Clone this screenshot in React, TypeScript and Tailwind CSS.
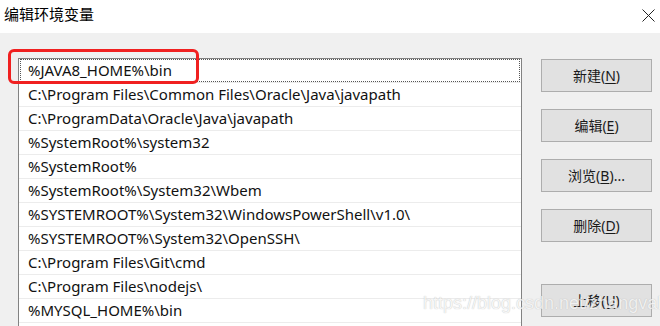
import React from 'react';

const paths = [
    '%JAVA8_HOME%\\bin',
    'C:\\Program Files\\Common Files\\Oracle\\Java\\javapath',
    'C:\\ProgramData\\Oracle\\Java\\javapath',
    '%SystemRoot%\\system32',
    '%SystemRoot%',
    '%SystemRoot%\\System32\\Wbem',
    '%SYSTEMROOT%\\System32\\WindowsPowerShell\\v1.0\\',
    '%SYSTEMROOT%\\System32\\OpenSSH\\',
    'C:\\Program Files\\Git\\cmd',
    'C:\\Program Files\\nodejs\\',
    '%MYSQL_HOME%\\bin',
];

const font = { fontFamily: '"Noto Sans", "Noto Sans CJK SC", sans-serif' };

const WinButton: React.FC<{ label: string; hotkey: string; suffix?: string; className?: string }> = ({ label, hotkey, suffix, className }) => (
    <button className={`w-[111px] h-[33px] bg-[#e1e1e1] border border-[#adadad] text-[14px] text-[#1a1a1a] flex items-center justify-center ${className ?? ''}`}>
        {label}(<span className="underline underline-offset-2">{hotkey}</span>){suffix}
    </button>
);

export default function App() {
    return (
        <div className="relative w-[660px] h-[326px] overflow-hidden bg-[#f0f0f0]" style={font}>
            {/* title bar */}
            <div className="h-[33px] bg-white flex items-center justify-between pl-[4px] pr-[5px]">
                <span className="text-[15px] text-black -mt-[4px]">编辑环境变量</span>
                <svg width="13" height="13" viewBox="0 0 13 13" className="-mt-[3px]">
                    <path d="M0.5 0.5 L12.5 12.5 M12.5 0.5 L0.5 12.5" stroke="#222" strokeWidth="1" />
                </svg>
            </div>

            <div className="flex pl-[18px] pt-[25px] gap-[19px]">
                {/* list */}
                <div className="w-[504px] h-[300px] border border-[#828282] bg-white">
                    {paths.map((p, i) => (
                        <div key={p} className="h-[24px] border-b border-[#ececec] px-[1px]">
                            <div className={`h-[23px] flex items-center pl-[7px] text-[15px] text-[#111] whitespace-nowrap ${i === 0 ? 'border border-dotted border-[#555]' : 'border border-transparent'}`}>
                                {p}
                            </div>
                        </div>
                    ))}
                </div>

                {/* buttons */}
                <div className="flex flex-col pt-[1px]">
                    <WinButton label="新建" hotkey="N" />
                    <WinButton label="编辑" hotkey="E" className="mt-[17px]" />
                    <WinButton label="浏览" hotkey="B" suffix="..." className="mt-[17px]" />
                    <WinButton label="删除" hotkey="D" className="mt-[17px]" />
                    <WinButton label="上移" hotkey="U" className="mt-[42px]" />
                </div>
            </div>

            {/* red highlight */}
            <div className="absolute left-[8px] top-[49px] w-[191px] h-[35px] border-[3px] border-[#f02020] rounded-[6px]" />

            {/* watermark */}
            <div
                className="absolute left-[423px] top-[290px] text-[18px] text-[#f4f4f4] opacity-80"
                style={{ fontFamily: '"Liberation Sans", Arial, sans-serif', textShadow: '0 0 1px #aaa' }}
            >
                https://blog.csdn.net/zhangvalue
            </div>
        </div>
    );
}
